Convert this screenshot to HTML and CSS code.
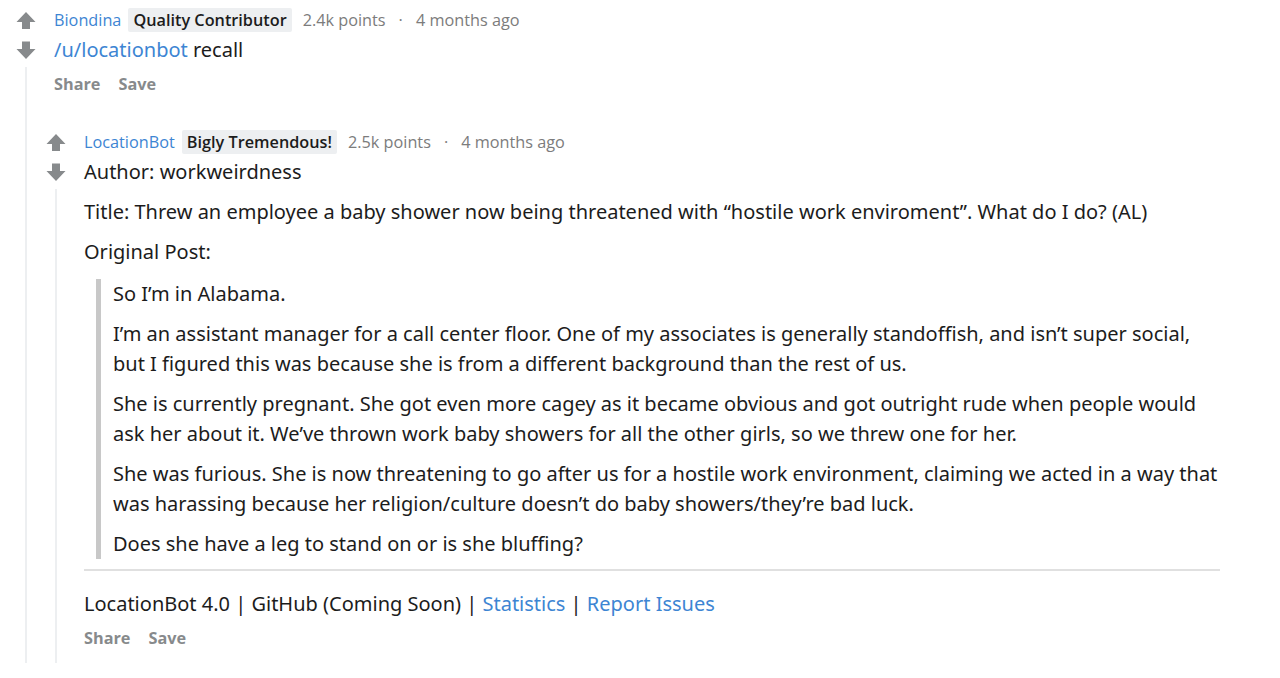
FILE: index.html
```html
<!DOCTYPE html>
<html>
<head>
<meta charset="utf-8">
<link rel="stylesheet" href="styles.css">
</head>
<body>
<div class="thread">
  <div class="comment">
    <div class="vote">
      <svg class="arrow" viewBox="0 0 20 20"><path d="M10 2 L19.5 12 L14 12 L14 19 L6 19 L6 12 L0.5 12 Z"/></svg>
      <svg class="arrow down" viewBox="0 0 20 20"><path d="M10 19 L19.5 9 L14 9 L14 1.5 L6 1.5 L6 9 L0.5 9 Z"/></svg>
      <div class="line"></div>
    </div>
    <div class="main">
      <div class="meta">
        <a class="user">Biondina</a>
        <span class="flair">Quality Contributor</span>
        <span class="info">2.4k points</span>
        <span class="dot">·</span>
        <span class="info">4 months ago</span>
      </div>
      <div class="body">
        <p class="first"><a class="link">/u/locationbot</a> recall</p>
      </div>
      <div class="actions"><span>Share</span><span>Save</span></div>

      <div class="comment child">
        <div class="vote">
          <svg class="arrow" viewBox="0 0 20 20"><path d="M10 2 L19.5 12 L14 12 L14 19 L6 19 L6 12 L0.5 12 Z"/></svg>
          <svg class="arrow down" viewBox="0 0 20 20"><path d="M10 19 L19.5 9 L14 9 L14 1.5 L6 1.5 L6 9 L0.5 9 Z"/></svg>
          <div class="line"></div>
        </div>
        <div class="main">
          <div class="meta">
            <a class="user">LocationBot</a>
            <span class="flair">Bigly Tremendous!</span>
            <span class="info">2.5k points</span>
            <span class="dot">·</span>
            <span class="info">4 months ago</span>
          </div>
          <div class="body">
            <p class="first">Author: workweirdness</p>
            <p>Title: Threw an employee a baby shower now being threatened with “hostile work enviroment”. What do I do? (AL)</p>
            <p>Original Post:</p>
            <blockquote>
              <p>So I’m in Alabama.</p>
              <p>I’m an assistant manager for a call center floor. One of my associates is generally standoffish, and isn’t super social, but I figured this was because she is from a different background than the rest of us.</p>
              <p>She is currently pregnant. She got even more cagey as it became obvious and got outright rude when people would ask her about it. We’ve thrown work baby showers for all the other girls, so we threw one for her.</p>
              <p>She was furious. She is now threatening to go after us for a hostile work environment, claiming we acted in a way that was harassing because her religion/culture doesn’t do baby showers/they’re bad luck.</p>
              <p>Does she have a leg to stand on or is she bluffing?</p>
            </blockquote>
            <hr>
            <p class="footer">LocationBot 4.0 | GitHub (Coming Soon) | <a class="link">Statistics</a> | <a class="link">Report Issues</a></p>
          </div>
          <div class="actions"><span>Share</span><span>Save</span></div>
        </div>
      </div>
    </div>
  </div>
</div>
</body>
</html>
```
FILE: styles.css
```css
html, body {
  margin: 0;
  padding: 0;
  background: #ffffff;
}
body {
  width: 1280px;
  height: 678px;
  overflow: hidden;
}
.thread {
  padding: 8px 0 0 16px;
}
.comment {
  display: flex;
  align-items: stretch;
}
.vote {
  width: 20px;
  flex: none;
  display: flex;
  flex-direction: column;
  align-items: center;
  margin-right: 18px;
}
.arrow {
  width: 20px;
  height: 20px;
  fill: #878a8c;
  display: block;
  margin-top: 2px;
}
.arrow.down {
  margin-top: 10px;
}
.line {
  width: 2px;
  background: #edeff1;
  flex: 1;
  margin-top: 7px;
  margin-left: -1px;
}
.main {
  flex: 1;
  min-width: 0;
}
.meta {
  font-family: "Open Sans", "Liberation Sans", sans-serif;
  font-size: 16.25px;
  line-height: 24px;
  height: 24px;
  display: flex;
  align-items: center;
  color: #7c7c7c;
}
.user {
  color: #3d85d3;
  margin-right: 7px;
}
.flair {
  background: #edeff1;
  color: #1c1c1c;
  font-weight: 600;
  padding: 0 5px;
  border-radius: 2px;
  margin-right: 11px;
}
.dot {
  margin: 0 13px;
}
.body {
  font-family: "Noto Sans", "DejaVu Sans", sans-serif;
  font-size: 20px;
  line-height: 30px;
  color: #1c1c1c;
  padding-right: 60px;
}
.body p {
  margin: 10px 0 0;
}
.body p.first {
  margin-top: 3px;
}
.body p.footer {
  margin-top: 18px;
}
.link {
  color: #3d85d3;
}
blockquote {
  margin: 12px 0 0 12px;
  padding: 0 0 0 12px;
  border-left: 5px solid #c8c8c8;
}
blockquote p:first-child {
  margin-top: 0;
}
hr {
  border: 0;
  height: 2px;
  background: #e0e0e0;
  margin: 10px 0 0;
}
.actions {
  font-family: "Open Sans", "Liberation Sans", sans-serif;
  font-weight: 700;
  font-size: 16.25px;
  color: #878a8c;
  display: flex;
  gap: 18px;
  height: 34px;
  align-items: center;
  margin-top: 2px;
}
.child {
  margin-left: -8px;
  margin-top: 29px;
}
.child .main {
  padding-bottom: 8px;
}
```
